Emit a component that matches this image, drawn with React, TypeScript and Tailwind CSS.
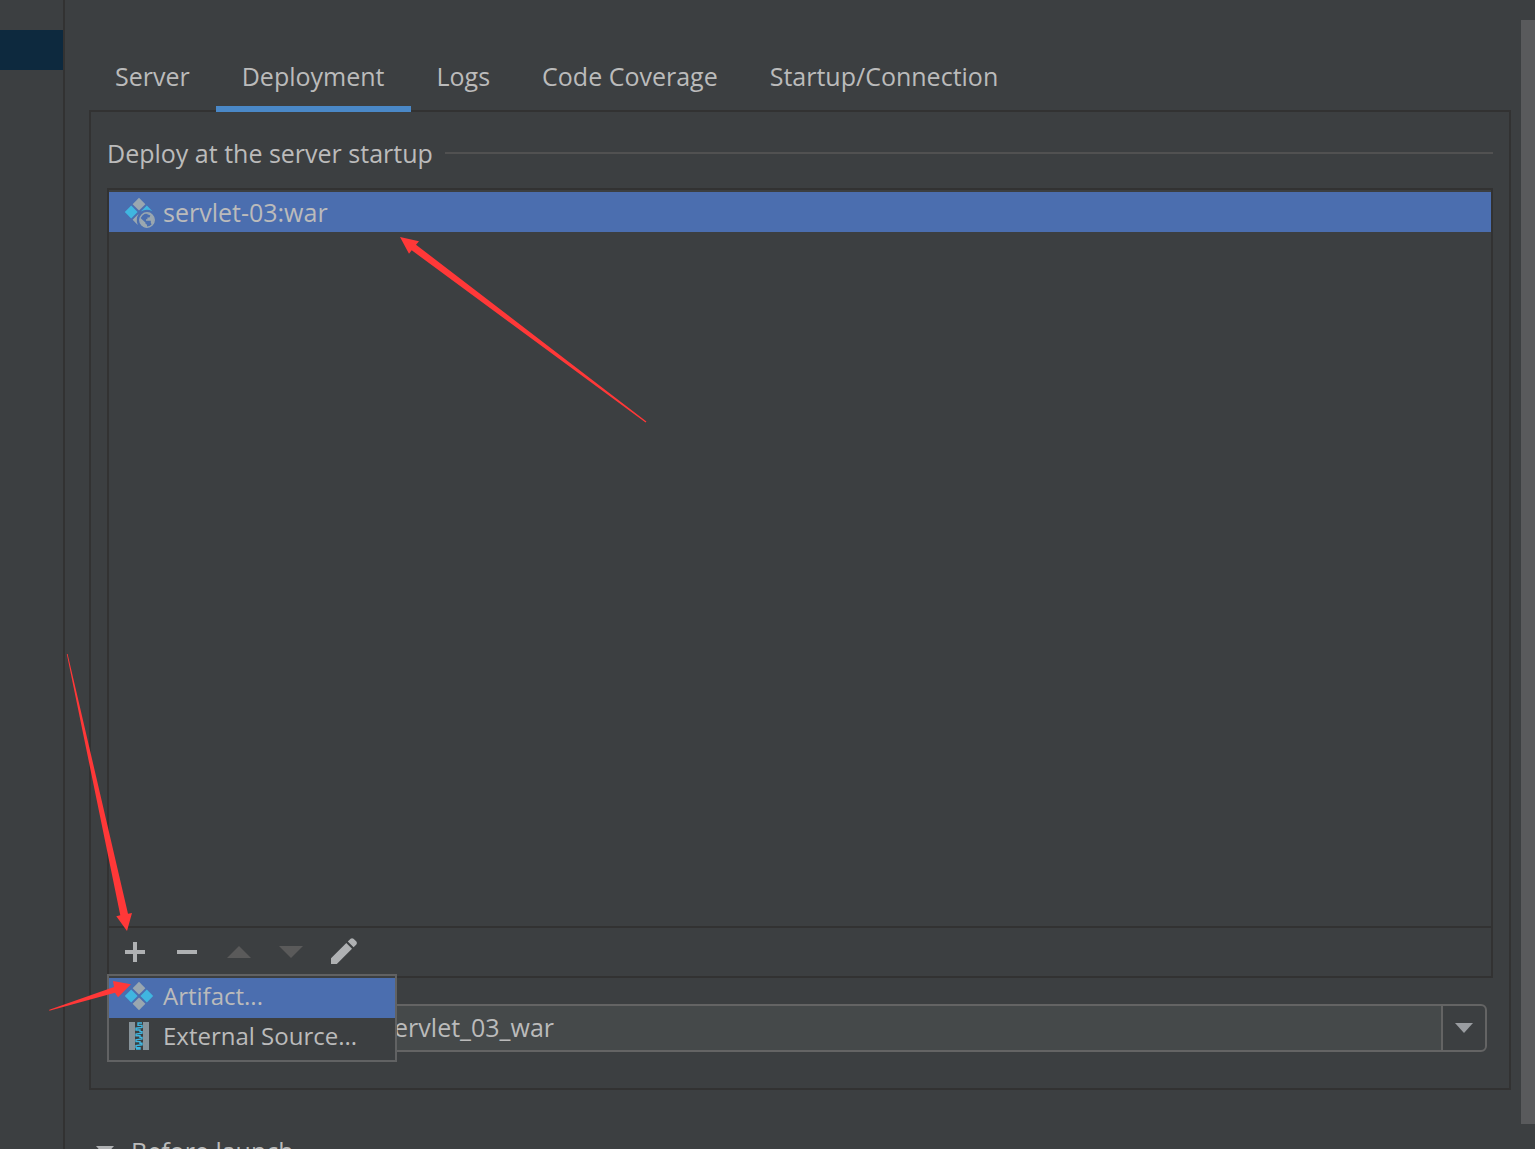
import React, { useState } from "react";

const TABS = ["Server", "Deployment", "Logs", "Code Coverage", "Startup/Connection"];

function ArtifactIcon() {
  return (
    <svg width="32" height="32" viewBox="0 0 32 32" className="shrink-0" aria-hidden="true">
      <path d="M16 1.8 22.4 8.2 16 14.6 9.6 8.2Z" fill="#9aa7b0" />
      <path d="M16 17.4 22.4 23.8 16 30.2 9.6 23.8Z" fill="#9aa7b0" />
      <path d="M8.2 9.6 14.6 16 8.2 22.4 1.8 16Z" fill="#40b6e0" />
      <path d="M23.8 9.6 30.2 16 23.8 22.4 17.4 16Z" fill="#40b6e0" />
    </svg>
  );
}

function WarIcon() {
  return (
    <svg width="32" height="32" viewBox="0 0 32 32" className="shrink-0" aria-hidden="true">
      <path d="M16 1.8 22.4 8.2 16 14.6 9.6 8.2Z" fill="#9aa7b0" />
      <path d="M8.2 9.6 14.6 16 8.2 22.4 1.8 16Z" fill="#40b6e0" />
      <path d="M17.8 15.4 23.8 9.6 29.4 15.2Q23.5 12.4 17.8 15.4Z" fill="#40b6e0" />
      <path d="M15.6 17.8 9.6 23.8 14.8 29Q12.4 23.4 15.6 17.8Z" fill="#9aa7b0" />
      <circle cx="24" cy="24" r="7.2" fill="none" stroke="#9aa7b0" strokeWidth="1.5" />
      <path
        d="M17 21.6 22.4 26.4V27.6L24 28.8V31.6Q17 31 17 24Z M22.6 17.4Q27 16.4 29.6 19.4L31 22.4 30.6 27.2 28.8 28.6 27.8 27V24.8H23V23.2H24.4V21.4H26.4L27.4 19.4Z"
        fill="#9aa7b0"
      />
    </svg>
  );
}

function ArchiveIcon() {
  return (
    <svg width="32" height="32" viewBox="0 0 32 32" className="shrink-0" aria-hidden="true">
      <path d="M6 2H12V30H6Z M20 2H26V30H20Z" fill="#87939a" />
      <path
        d="M19 3H15V5.4H19V7.4L13 8.2V10H17V11.6H19V13.2L13 14V15.8H17V17.4H19V19L13 19.8V21.6H17V23.2H19V24.8L13 25.6V27.6H17V29H13"
        fill="none"
        stroke="#40b6e0"
        strokeWidth="1.4"
      />
    </svg>
  );
}

function ToolIcon({ d, fill }: { d: string; fill: string }) {
  return (
    <svg width="32" height="32" viewBox="0 0 32 32" aria-hidden="true">
      <path d={d} fill={fill} />
    </svg>
  );
}

const TOOLS = [
  { name: "Add", d: "M14 6H18V14H26V18H18V26H14V18H6V14H14Z", fill: "#afb1b3", off: false },
  { name: "Remove", d: "M6 14H26V18H6Z", fill: "#afb1b3", off: false },
  { name: "Move up", d: "M4 22 16 10 28 22Z", fill: "#5a5a5a", off: true },
  { name: "Move down", d: "M4 10H28L16 22Z", fill: "#5a5a5a", off: true },
  {
    name: "Edit",
    d: "M4 22.2 19.3 7 25 12.7 9.8 28H4Z M20.8 5.5 23.6 2.7Q25 1.6 26.5 2.7L29.4 5.6Q30.5 7 29.4 8.5L26.6 11.3Z",
    fill: "#afb1b3",
    off: false,
  },
];

export default function App() {
  const [tab, setTab] = useState("Deployment");
  const [context, setContext] = useState("/servlet_03_war");

  return (
    <div className="flex h-screen overflow-hidden bg-[#3c3f41] font-['Open_Sans','Noto_Sans',sans-serif] text-[25px] leading-9 text-[#bbbbbb]">
      <aside className="w-[65px] shrink-0 border-r-2 border-[#323232] pt-[30px]">
        <div className="h-10 bg-[#0d293e]" />
      </aside>

      <main className="flex min-w-0 flex-1 flex-col pl-6 pr-[10px] pt-12">
        <div role="tablist" className="relative -mb-[2px] flex shrink-0">
          {TABS.map((t) => (
            <button
              key={t}
              role="tab"
              aria-selected={t === tab}
              onClick={() => setTab(t)}
              className={
                "h-16 whitespace-nowrap border-b-6 px-[26px] pb-[2px] " +
                (t === tab ? "border-[#4a88c7]" : "border-transparent")
              }
            >
              {t}
            </button>
          ))}
        </div>

        <section className="flex min-h-0 flex-1 flex-col border-2 border-[#323232] px-4 pb-9 pt-[23px]">
          <div className="flex items-center gap-3">
            <h2>Deploy at the server startup</h2>
            <div className="h-[2px] flex-1 bg-[#515151]" />
          </div>

          <div className="mt-[17px] flex min-h-0 flex-1 flex-col border-2 border-[#323232]">
            <div className="min-h-0 flex-1 pt-[2px]">
              <div className="relative flex h-10 items-center gap-2 bg-[#4b6eaf] pl-[14px]">
                <WarIcon />
                <span>servlet-03:war</span>
                <svg
                  className="absolute left-[291px] top-[45px]"
                  width="247"
                  height="186"
                  viewBox="400 237 247 186"
                  aria-hidden="true"
                >
                  <path d="M400 237 419 241.3 416 244.7 646.4 421.6 645.6 422.4 411.7 250.3 409 253.7Z" fill="#ff3838" />
                </svg>
              </div>
            </div>

            <div className="relative flex h-[50px] shrink-0 border-t-2 border-[#323232]">
              {TOOLS.map((b) => (
                <button
                  key={b.name}
                  aria-label={b.name}
                  disabled={b.off}
                  className="flex w-[52px] items-center justify-center"
                >
                  <ToolIcon d={b.d} fill={b.fill} />
                </button>
              ))}
              <svg
                className="absolute -left-[43px] bottom-[44px]"
                width="66"
                height="278"
                viewBox="66 654 66 278"
                aria-hidden="true"
              >
                <path d="M127 931 132 913 128 913.7 67.6 654 66.8 654 120.3 915.3 116.3 916.3Z" fill="#ff3838" />
              </svg>

              <div
                role="menu"
                className="absolute -left-[2px] top-[46px] z-10 w-[290px] border-2 border-[#616263] bg-[#3c3f41] py-[2px] text-[24px]"
              >
                <button role="menuitem" className="flex h-10 w-full items-center gap-2 bg-[#4b6eaf] pb-1 pl-[14px]">
                  <ArtifactIcon />
                  Artifact...
                </button>
                <button role="menuitem" className="flex h-10 w-full items-center gap-2 whitespace-nowrap pb-1 pl-[14px]">
                  <ArchiveIcon />
                  External Source...
                </button>
                <svg
                  className="absolute -left-[60px] top-1"
                  width="82"
                  height="32"
                  viewBox="49 980 82 32"
                  aria-hidden="true"
                >
                  <path d="M131 984.3 113 981 114 987 49.3 1009.8 49.3 1010.8 115 992.7 118 997.3Z" fill="#ff3838" />
                </svg>
              </div>
            </div>
          </div>

          <div className="ml-64 mr-[6px] mt-[26px] flex h-12 shrink-0 overflow-hidden rounded-md border-2 border-[#646464]">
            <input
              aria-label="Application context"
              value={context}
              onChange={(e) => setContext(e.target.value)}
              className="min-w-0 flex-1 bg-[#45494a] px-2 pb-[2px] outline-none"
            />
            <button
              aria-label="Show contexts"
              className="flex w-11 items-center justify-center border-l-2 border-[#646464]"
            >
              <svg width="18" height="10" viewBox="0 0 18 10" aria-hidden="true">
                <path d="M0 0H18L9 10Z" fill="#9a9da1" />
              </svg>
            </button>
          </div>
        </section>

        <div className="h-[59px] shrink-0 overflow-hidden pt-[43px]">
          <button className="flex items-center gap-[17px] pl-[7px]">
            <svg width="18" height="10" viewBox="0 0 18 10" aria-hidden="true">
              <path d="M0 0H18L9 10Z" fill="#afb1b3" />
            </svg>
            Before launch
          </button>
        </div>
      </main>

      <div className="mb-[25px] mt-5 w-[14px] shrink-0 bg-[#595a5c]" />
    </div>
  );
}
